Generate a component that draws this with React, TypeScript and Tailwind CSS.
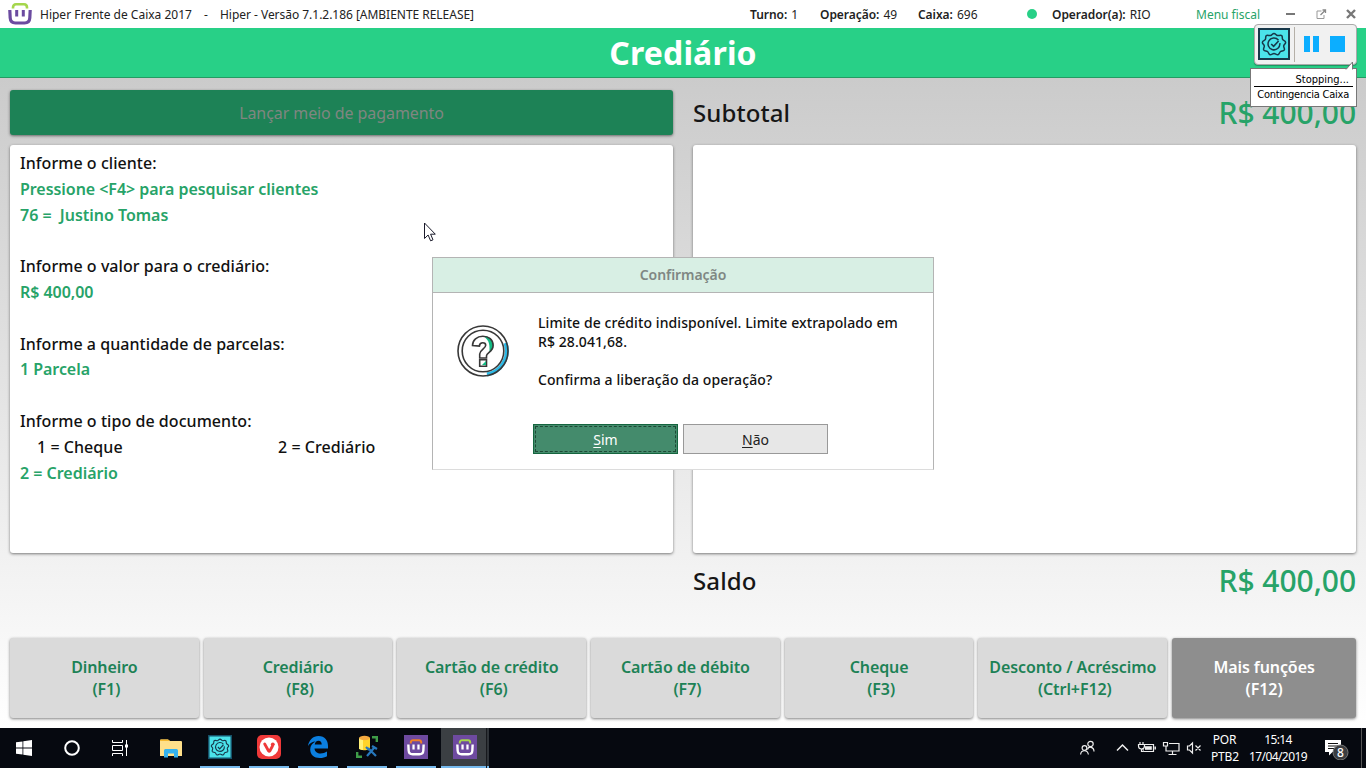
import React from "react";

type Fn = { label: string; key: string };

const functions: Fn[] = [
  { label: "Dinheiro", key: "(F1)" },
  { label: "Crediário", key: "(F8)" },
  { label: "Cartão de crédito", key: "(F6)" },
  { label: "Cartão de débito", key: "(F7)" },
  { label: "Cheque", key: "(F3)" },
  { label: "Desconto / Acréscimo", key: "(Ctrl+F12)" },
];

function Basket({ body, handle, className }: { body: string; handle: string; className: string }) {
  return (
    <svg viewBox="0 0 24 22" className={className} fill="none">
      <path d="M5 5.500V4.500C5 2.500 6.200 1.300 8 1.300h8c1.800 0 3 1.200 3 3.200v1" stroke={handle} strokeWidth="2.600" />
      <path d="M1.800 7l.4 8c.2 3.500 2 5 5.300 5h9c3.300 0 5.100-1.500 5.300-5l.4-8" stroke={body} strokeWidth="3.200" />
      <path d="M8.700 7v6.500M15.300 7v6.500" stroke={body} strokeWidth="3" />
    </svg>
  );
}

function Gear({ className, box }: { className: string; box: string }) {
  return (
    <svg viewBox="0 0 32 32" className={className} fill="none" stroke="#17384a">
      <rect x="1" y="1" width="30" height="30" fill="#4be3ea" stroke={box} strokeWidth="2" />
      <path
        d="M16 5.500c1.600 0 2 1.900 3.500 2.100 1.500.2 3-1 4.200 0s.1 2.700 1 3.900c.9 1.200 2.800 1.200 2.900 2.800.1 1.500-1.700 2.200-1.900 3.600-.2 1.500 1.300 2.700.6 4-.8 1.400-2.600.7-3.800 1.600-1.200.9-1 2.800-2.500 3.200-1.500.4-2.500-1.300-4-1.300s-2.500 1.700-4 1.300c-1.500-.4-1.300-2.300-2.500-3.200-1.200-.9-3-.2-3.800-1.600-.7-1.300.8-2.500.6-4-.2-1.400-2-2.100-1.900-3.600.1-1.600 2-1.600 2.900-2.800.9-1.200-.2-2.900 1-3.900s2.700.2 4.200 0c1.500-.2 1.900-2.100 3.500-2.100z"
        strokeWidth="1.500"
      />
      <path d="M20.500 12.200a5.900 5.900 0 1 0 1.300 3" strokeWidth="1.500" />
      <path d="M13.200 16l2.400 2.400 5-5.400" strokeWidth="1.600" />
    </svg>
  );
}

function TitleBar() {
  return (
    <header className="flex h-7 items-center bg-white text-[12px] text-[#222]">
      <Basket body="#6b4ba0" handle="#a5d64c" className="ml-2 h-[22px] w-6" />
      <span className="mt-[2px] ml-2 w-[164px] whitespace-pre">Hiper Frente de Caixa 2017</span>
      <span className="mt-[2px] w-4">-</span>
      <span className="mt-[2px] tracking-[-0.03px]">Hiper - Versão 7.1.2.186 [AMBIENTE RELEASE]</span>
      <div className="ml-auto flex items-center">
        <span className="mt-[2px] w-[70px]"><span className="mr-px font-semibold tracking-[-0.05px]">Turno:</span> 1</span>
        <span className="mt-[2px] w-[98px]"><span className="mr-px font-semibold tracking-[-0.05px]">Operação:</span> 49</span>
        <span className="mt-[2px] w-[109px]"><span className="mr-px font-semibold tracking-[-0.05px]">Caixa:</span> 696</span>
        <span className="mr-[15px] size-[10px] rounded-full bg-[#28d087]" />
        <span className="mt-[2px] w-[144px]"><span className="mr-px font-semibold tracking-[-0.05px]">Operador(a):</span> RIO</span>
        <span className="mt-[2px] w-[90px] text-[#27a368]">Menu fiscal</span>
        <svg className="mr-[10px] h-4 w-[70px]" viewBox="0 0 70 16" fill="none" stroke="#777">
          <path d="M0 8h9" strokeWidth="2" />
          <path d="M35.500 5H31v7.500h7V9" stroke="#999" />
          <path d="M34.500 9L39 4.500M36.500 4H39.500V7" stroke="#888" strokeWidth="1.300" />
          <path d="M61 4l8 8M69 4l-8 8" strokeWidth="2.400" />
        </svg>
      </div>
    </header>
  );
}

function Form() {
  return (
    <section className="h-[408px] rounded-[3px] bg-white px-[10px] pt-[6px] text-[16px] leading-[25.800px] font-medium tracking-[0.05px] text-[#111] shadow-[0_1px_3px_rgba(0,0,0,0.5)]">
      <p>Informe o cliente:</p>
      <p className="font-semibold tracking-[-0.05px] text-[#27a368]">Pressione &lt;F4&gt; para pesquisar clientes</p>
      <p className="font-semibold tracking-[-0.02px] whitespace-pre text-[#27a368]">76 =  Justino Tomas</p>
      <p className="mt-[25.800px]">Informe o valor para o crediário:</p>
      <p className="font-semibold tracking-[-0.05px] text-[#27a368]">R$ 400,00</p>
      <p className="mt-[25.800px]">Informe a quantidade de parcelas:</p>
      <p className="font-semibold tracking-[-0.05px] text-[#27a368]">1 Parcela</p>
      <p className="mt-[25.800px]">Informe o tipo de documento:</p>
      <p className="flex pl-[17px]">
        <span className="w-[241px]">1 = Cheque</span>
        <span>2 = Crediário</span>
      </p>
      <p className="font-semibold tracking-[-0.02px] text-[#27a368]">2 = Crediário</p>
    </section>
  );
}

function Dialog() {
  return (
    <div className="absolute top-[257px] left-[432px] h-[213px] w-[502px] border border-[#b4b4b4] border-b-[#dcdcdc] bg-white text-[14px]">
      <div className="flex h-[35px] items-center justify-center border-b border-[#b4b4b4] bg-[#d8efe4] pb-[2px] font-semibold tracking-[-0.05px] text-[#7f8783]">Confirmação</div>
      <div className="flex pt-5 pl-6">
        <svg className="mt-3 size-[52px]" viewBox="0 0 52 52" fill="none">
          <path d="M48.500 18A24 24 0 0 1 30 49.500" stroke="#2bb9e6" strokeWidth="4" />
          <circle cx="26" cy="26" r="25" stroke="#383838" strokeWidth="1.600" />
          <circle cx="26" cy="26" r="20.800" stroke="#383838" strokeWidth="1.600" />
          <path d="M26 11c7 0 10.500 4 10.500 9 0 4-2 6-4 7.500 0-6 1-12-6.500-16.500z" fill="#10bb83" />
          <path d="M15.500 20.500c0-5.500 4.500-9.300 10.300-9.300 6 0 10.300 3.500 10.300 9.200 0 6.200-6.600 7.600-6.600 10.400v2.200h-6.800V29c0-4.200 6-5.400 6-8.700 0-1.500-1.200-2.500-2.900-2.500-2 0-3.300 1.300-3.400 3.300z" stroke="#383838" strokeWidth="1.600" />
          <path d="M22.700 34.800h6.800v6.400h-6.800z" stroke="#383838" strokeWidth="1.600" />
          <path d="M25 40l4-4v4z" fill="#10bb83" />
        </svg>
        <p className="ml-[29px] leading-[19px] font-medium tracking-[0.085px] text-[#111]">
          Limite de crédito indisponível. Limite extrapolado em
          <br />
          R$ 28.041,68.
          <br />
          <br />
          Confirma a liberação da operação?
        </p>
      </div>
      <div className="mt-[35px] ml-[100px] flex gap-[5px]">
        <button className="h-[30px] w-[145px] border border-[#15653f] bg-[#448b6c] p-px text-white">
          <span className="flex h-full items-center justify-center border border-dashed border-[#1d4a35]"><span><u className="underline-offset-2">S</u>im</span></span>
        </button>
        <button className="h-[30px] w-[145px] border border-[#999] bg-[#e7e7e7] text-[#222]"><u className="underline-offset-2">N</u>ão</button>
      </div>
    </div>
  );
}

function Recorder() {
  return (
    <div className="absolute top-[24px] left-[1250px] w-[107px]">
      <div className="ml-1 flex h-[41px] w-[103px] items-center rounded-[4px] border border-[#aaa] bg-[#f1f1f1] pb-px pl-[3px] shadow-[0_1px_1px_rgba(0,0,0,0.3)]">
        <Gear box="#17384a" className="size-8 shrink-0" />
        <span className="ml-1 h-[35px] w-px shrink-0 bg-[#b5b0a8]" />
        <span className="ml-[9px] h-[16px] w-[6px] bg-[#0caeff]" />
        <span className="ml-[3px] h-[16px] w-[6px] bg-[#0caeff]" />
        <span className="ml-[11px] h-[16px] w-[15px] bg-[#0caeff]" />
      </div>
      <div className="relative mt-[3px] h-[39px] border border-[#777] bg-white px-[3px] pt-[4px] text-right font-['DejaVu_Sans_Condensed','DejaVu_Sans',sans-serif] text-[11px] leading-[13px] text-black">
        <svg className="absolute -top-[8px] right-0 h-[9px] w-3" viewBox="0 0 12 9">
          <path d="M2 8.500L8.500 1v7.500" fill="#fff" stroke="#777" />
          <path d="M3 8.500h5" stroke="#fff" />
        </svg>
        <div className="border-b border-black pr-[4px]">Stopping...</div>
        <div className="pt-px pr-[4px] tracking-[-0.23px] whitespace-nowrap">Contingencia Caixa</div>
      </div>
    </div>
  );
}

function AppSlot({ children, active }: { children: React.ReactNode; active?: boolean }) {
  return (
    <div className={active ? "flex h-10 w-[45px] flex-col items-end bg-[#3b3f43]" : "flex h-10 w-10 flex-col items-center"}>
      <div className={active ? "flex h-[38px] items-center pr-[9px]" : "flex h-[38px] items-center"}>{children}</div>
      <div className="h-[2px] w-full bg-[#76b9ed]" />
    </div>
  );
}

function Taskbar() {
  return (
    <footer className="flex h-10 items-center bg-[#060910] text-[12px] text-white">
      <svg className="ml-4 size-4" viewBox="0 0 16 16" fill="#fff">
        <path d="M0 2.300L6.500 1.400v6.200H0zM7.300 1.300L16 0v7.600H7.300zM0 8.400h6.500v6.200L0 13.700zM7.300 8.400H16V16l-8.700-1.300z" />
      </svg>
      <svg className="ml-8 size-4" viewBox="0 0 16 16" fill="none" stroke="#fff" strokeWidth="2">
        <circle cx="8" cy="8" r="6.800" />
      </svg>
      <svg className="ml-8 size-4" viewBox="0 0 16 16" fill="none" stroke="#fff">
        <path d="M.500 0v2.500h10V0M.500 16v-2.500h10V16M.500 5.500h10v5H.500zM14.500 0v16" />
        <path d="M13 4.500h3v3h-3z" fill="#fff" stroke="none" />
      </svg>
      <svg className="ml-8 h-[19px] w-[22px]" viewBox="0 0 22 19">
        <path d="M0 1.500Q0 .500 1 .500h7l2 1.500h11q1 0 1 1V17H0z" fill="#ffe08a" />
        <path d="M0 1.500Q0 .500 1 .500h7l2 1.500H0z" fill="#f5b82e" />
        <path d="M4 18.500v-7q0-1.500 1.500-1.500h11q1.500 0 1.500 1.500v7h-4v-4H8v4z" fill="#35b2ee" />
      </svg>
      <div className="ml-[18px] flex gap-[9px]">
        <AppSlot><Gear box="#155068" className="size-6" /></AppSlot>
        <AppSlot>
          <svg className="size-6" viewBox="0 0 24 24">
            <rect width="24" height="24" rx="5" fill="#ef3939" />
            <circle cx="12" cy="12" r="9.500" fill="#fff" />
            <path d="M7.700 9l3.900 7q.6.900 1.200 0L15.500 11" fill="none" stroke="#ef3939" strokeWidth="2.800" strokeLinecap="round" strokeLinejoin="round" />
            <circle cx="15.800" cy="9.300" r="1.900" fill="#ef3939" />
          </svg>
        </AppSlot>
        <AppSlot>
          <svg className="h-[22px] w-5" viewBox="0 0 20 22">
            <path d="M0 10C1 4 5 0 10.500 0 17 0 20 4.500 20 10v2.500H6.500c.3 3.500 3 5 6 5 2.500 0 4.500-.7 6.500-2v4.700C17 21.400 14.700 22 11.800 22 6 22 2.200 18.500 2.200 13.500c0-3.500 2-6.500 5.300-8C4.500 5.500 1.800 7 0 10zm6.700-1.500h7c0-2.300-1-3.700-3.300-3.700-2 0-3.300 1.500-3.700 3.700z" fill="#0b7fe0" />
          </svg>
        </AppSlot>
        <AppSlot>
          <svg className="size-6" viewBox="0 0 24 24" fill="none">
            <path d="M17 2.200h4.800V7M2.200 17v4.800H7" stroke="#3f9d49" strokeWidth="2.400" />
            <path d="M4 3v10c0 3 11 3 11 0V3z" fill="#ffd42a" />
            <path d="M4 3v11l4 1V3z" fill="#fff078" />
            <ellipse cx="9.500" cy="3" rx="5.500" ry="2.200" fill="#f4a940" />
            <path d="M12 21l7-8M13 13l8 8M17 11l5 3M11 12l3 3" stroke="#2778bd" strokeWidth="2.200" />
          </svg>
        </AppSlot>
        <AppSlot><span className="flex size-6 items-center justify-center bg-[#6e4aa0]"><Basket body="#fff" handle="#f07f24" className="h-[17px] w-[18px]" /></span></AppSlot>
        <div className="-ml-1 flex">
          <AppSlot active><span className="flex size-6 items-center justify-center bg-[#6e4aa0]"><Basket body="#fff" handle="#a5d64c" className="h-[17px] w-[18px]" /></span></AppSlot>
          <div className="flex h-10 w-[3px] flex-col justify-end border-l border-[#17191d] bg-[#303439]"><div className="h-[2px] bg-[#76b9ed]" /></div>
        </div>
      </div>
      <svg className="ml-auto h-4 w-[122px]" viewBox="0 0 122 16" fill="none" stroke="#eee" strokeWidth="1.200">
        <circle cx="10.500" cy="4" r="2.700" />
        <path d="M7.500 9.500c.8-3.500 6.500-3 6.500 2" />
        <circle cx="4.500" cy="8" r="2.400" />
        <path d="M.600 14.500c.4-5 7-5 7.800 0" />
        <path d="M37 10.500L42.500 5 48 10.500" strokeWidth="1.500" />
        <path d="M63 4.500h10.500v7H63z" />
        <path d="M65 6.200h6.800v3.600H65z" fill="#eee" stroke="none" />
        <path d="M75.200 6.500v3" strokeWidth="1.500" />
        <path d="M60 2v2.500M63 2v2.500M58.500 4.500h6V6c0 2-1 3-3 3s-3-1-3-3zM61.500 9v2.500h2" fill="#060910" />
        <path d="M83.500 2.500h4v3.500h-4zM89 3.500h10v7.500H86V6M92.500 11v3M88.500 14.500h8" />
        <path d="M107.500 6h2l3-3v10l-3-3h-2zM115.500 5.500l5 5M120.500 5.500l-5 5" />
      </svg>
      <div className="ml-[9px] w-[27px] text-center leading-[17px] tracking-[-0.2px]">POR<br />PTB2</div>
      <div className="ml-[7px] w-[66px] text-center leading-[17px] tracking-[-0.6px]">15:14<br />17/04/2019</div>
      <div className="relative ml-[14px] h-6 w-[26px]">
        <svg className="size-full" viewBox="0 0 26 24">
          <path d="M0 4h16v12H7.500L4 19.500V16H0z" fill="#fff" />
          <path d="M3 7.500h10M3 10h10M3 12.500h7" stroke="#111" />
          <circle cx="15.500" cy="16.500" r="7.500" fill="#3b3d40" stroke="#777" />
        </svg>
        <span className="absolute top-[9px] left-[12px] text-[12px] leading-[15px] font-medium">8</span>
      </div>
      <span className="mr-1 ml-[10px] h-10 w-px bg-[#555]" />
    </footer>
  );
}

export default function App() {
  return (
    <div className="relative flex h-[768px] w-[1366px] flex-col overflow-hidden font-['Noto_Sans','Open_Sans',sans-serif]">
      <TitleBar />
      <h1 className="flex h-[50px] items-center justify-center border-b border-[#249b63] bg-[#28d087] text-[32px] font-bold tracking-[0.15px] text-white">Crediário</h1>
      <main className="flex grow flex-col bg-linear-to-b from-[#cbcbcb] to-white px-[10px] pt-3">
        <div className="grid grid-cols-2 gap-x-5">
          <div className="flex h-[45px] items-center justify-center rounded-[3px] bg-[#1d8256] text-[16px] tracking-[-0.08px] text-[#808681] shadow-[0_1px_3px_rgba(0,0,0,0.5)]">Lançar meio de pagamento</div>
          <div className="flex h-[45px] items-center justify-between font-medium">
            <span className="text-[24px] tracking-[0.1px] text-[#161616]">Subtotal</span>
            <span className="text-[30px] tracking-[-0.05px] text-[#27a368]">R$ 400,00</span>
          </div>
        </div>
        <div className="mt-[10px] grid grid-cols-2 gap-x-5">
          <Form />
          <section className="h-[408px] rounded-[3px] bg-white shadow-[0_1px_3px_rgba(0,0,0,0.5)]" />
        </div>
        <div className="mt-[5px] ml-[683px] flex h-[45px] items-center justify-between font-medium">
          <span className="text-[24px] tracking-[0.1px] text-[#161616]">Saldo</span>
          <span className="text-[30px] tracking-[-0.05px] text-[#27a368]">R$ 400,00</span>
        </div>
        <div className="mt-[35px] flex h-20 gap-[5px] text-center text-[16px] leading-[22px] font-semibold tracking-[-0.08px]">
          {functions.map((f) => (
            <button key={f.label} className="w-[188.700px] rounded-[3px] bg-[#dadada] whitespace-nowrap text-[#1d8256] shadow-[0_1px_3px_rgba(0,0,0,0.5)]">
              {f.label}<br /><span className="pl-1">{f.key}</span>
            </button>
          ))}
          <button className="grow rounded-[3px] bg-[#8e8e8e] text-white shadow-[0_1px_3px_rgba(0,0,0,0.5)]">Mais funções<br />(F12)</button>
        </div>
      </main>
      <Taskbar />
      <Dialog />
      <Recorder />
      <svg className="absolute top-[222px] left-[424px] h-5 w-3" viewBox="0 0 12 20">
        <path d="M.500 1v15.500l3.600-3.500 2.500 5.800 2.400-1-2.400-5.600h4.700z" fill="#fff" stroke="#1a1a2a" />
      </svg>
    </div>
  );
}
